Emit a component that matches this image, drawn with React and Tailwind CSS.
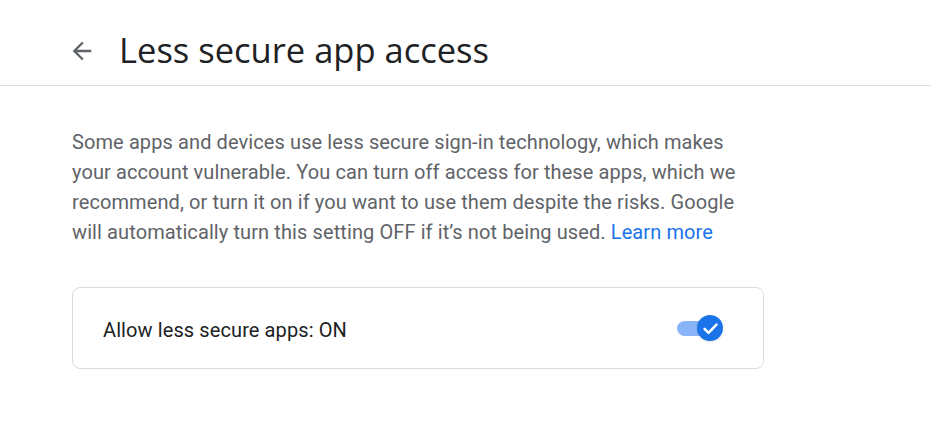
export default function App() {
  return (
    <div className="min-h-screen bg-white" style={{ fontFamily: "Roboto, 'Liberation Sans', sans-serif" }}>
      {/* header */}
      <header className="flex items-center h-[86px] border-b border-[#dadce0] pl-[68px] pt-[17px]">
        <button className="w-[28px] h-[28px] flex items-center justify-center text-[#5f6368]">
          <svg width="28" height="28" viewBox="0 0 24 24" fill="currentColor">
            <path d="M20 11H7.83l5.59-5.59L12 4l-8 8 8 8 1.41-1.41L7.83 13H20v-2z" />
          </svg>
        </button>
        <h1 className="ml-[23px] text-[34.5px] leading-none text-[#202124] pb-[2px]" style={{ fontFamily: "'Open Sans', Roboto, sans-serif" }}>
          Less secure app access
        </h1>
      </header>

      <main className="pl-[72px] pt-[41px] w-[764px]">
        <p className="text-[20px] leading-[30px] text-[#5f6368] tracking-[0.1px]">
          Some apps and devices use less secure sign-in technology, which makes your account vulnerable. You can turn off access for these apps, which we recommend, or turn it on if you want to use them despite the risks. Google will automatically turn this setting OFF if it’s not being used.{' '}
          <a className="text-[#1a73e8]">Learn more</a>
        </p>

        <div className="mt-[40px] h-[82px] border border-[#dadce0] rounded-lg flex items-center justify-between pl-[30px] pr-[40px]">
          <span className="text-[20px] text-[#202124] tracking-[0.1px] pt-[4px]">Allow less secure apps: ON</span>
          <div className="relative w-[46px] h-[26px] flex items-center">
            <div className="w-[34px] h-[15px] rounded-full bg-[#8ab4f8]" />
            <div className="absolute right-0 top-0 w-[26px] h-[26px] rounded-full bg-[#1a73e8] shadow flex items-center justify-center">
              <svg width="19" height="19" viewBox="0 0 24 24" fill="none" stroke="white" strokeWidth="3.2" strokeLinecap="round" strokeLinejoin="round">
                <path d="M4.5 12.5l5 5L19.5 7" />
              </svg>
            </div>
          </div>
        </div>
      </main>
    </div>
  );
}
